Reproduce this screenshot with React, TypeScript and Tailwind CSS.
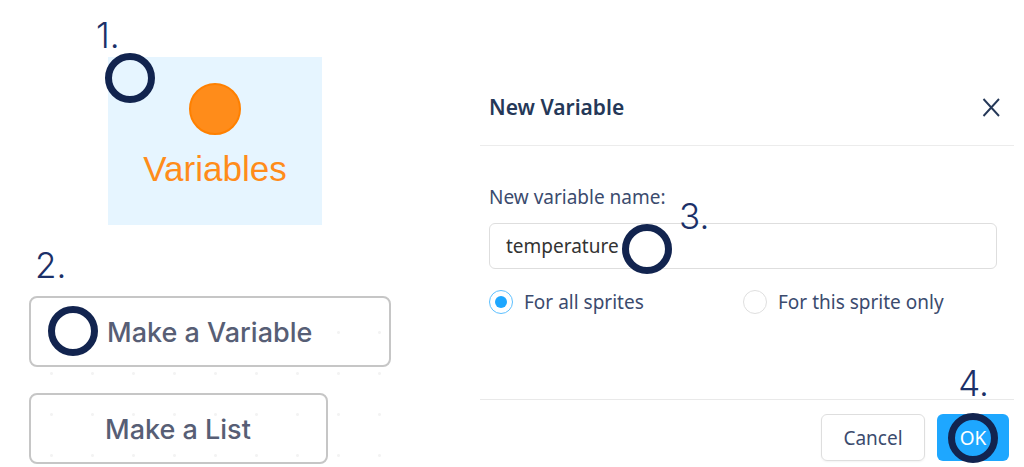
import type { ReactNode } from "react";

function Ring({ className }: { className: string }) {
  return (
    <span
      aria-hidden="true"
      className={`pointer-events-none absolute size-[50px] rounded-full border-[7px] border-[#12244f] ${className}`}
    />
  );
}

function Step({ children, className }: { children: ReactNode; className: string }) {
  return (
    <span className={`font-['Inter',sans-serif] text-[35px] leading-10 font-[350] text-[#1b3068] ${className}`}>
      {children}
    </span>
  );
}

function PaletteButton({ children, className }: { children: ReactNode; className: string }) {
  return (
    <button
      type="button"
      className={`h-[71px] rounded-lg border-2 border-[#c6c6c6] pt-0.5 font-['Inter',sans-serif] text-[27px] leading-9 font-medium whitespace-nowrap text-[#575e75] ${className}`}
    >
      {children}
    </button>
  );
}

function ScopeOption({ label, checked }: { label: string; checked?: boolean }) {
  return (
    <label className="flex items-center gap-[11px] whitespace-nowrap">
      <input
        type="radio"
        name="scope"
        defaultChecked={checked}
        className="grid size-6 shrink-0 appearance-none place-items-center rounded-full border border-[#dfdfdf] before:size-3 before:rounded-full checked:border-[#5dc0ff] checked:before:bg-[#1ea7ff]"
      />
      {label}
    </label>
  );
}

function Palette() {
  return (
    <section className="pt-[57px] pl-[29px]">
      <div className="relative ml-[79px] flex w-[214px] flex-col items-center gap-3 bg-[#e6f5ff] pt-[26px] pb-[34px]">
        <span className="size-[52px] rounded-full border-2 border-[#ff8000] bg-[#ff8c1a]" />
        <span className="font-['Liberation_Sans',sans-serif] text-[35px] leading-11 text-[#ff8c1a]">
          Variables
        </span>
        <Step className="absolute -top-[42px] -left-3">1.</Step>
        <Ring className="-top-1 -left-[3px]" />
      </div>
      <Step className="mt-5 ml-1.5 block">2.</Step>
      <div className="mt-[11px] flex w-[362px] flex-col items-start gap-[26px] bg-[radial-gradient(circle,#f3f3f3_1px,transparent_2px)] bg-size-[41px_41px] bg-position-[2px_16px]">
        <div className="relative">
          <PaletteButton className="pr-[77px] pl-[76px]">Make a Variable</PaletteButton>
          <Ring className="top-2.5 left-[19px]" />
        </div>
        <PaletteButton className="pr-[75px] pl-[74px]">Make a List</PaletteButton>
      </div>
    </section>
  );
}

function VariableDialog() {
  return (
    <section
      role="dialog"
      aria-labelledby="dialog-title"
      className="mt-[68px] mr-2.5 font-['Noto_Sans',sans-serif] text-[19px] leading-7 text-[#3b4b6e]"
    >
      <header className="flex h-[78px] items-center justify-between border-b border-[#ececec] pr-3.5 pl-[9px]">
        <h2 id="dialog-title" className="text-[21px] font-semibold text-[#253858]">
          New Variable
        </h2>
        <button type="button" aria-label="Close" className="text-[#253858]">
          <svg width="18" height="20" viewBox="0 0 18 20" fill="none" stroke="currentColor" strokeWidth="1.9">
            <path d="M1.5 2 17 19M17 2 1.5 19" />
          </svg>
        </button>
      </header>
      <div className="pt-[37px] pr-[17px] pb-[83px] pl-[9px]">
        <label htmlFor="variable-name" className="block">
          New variable name:
        </label>
        <div className="relative mt-3">
          <input
            id="variable-name"
            type="text"
            defaultValue="temperature"
            className="h-[46px] w-full rounded-md border border-[#dedede] px-4 text-[#333333]"
          />
          <Step className="absolute -top-[27px] left-[190px]">3.</Step>
          <Ring className="top-[1px] left-[133px]" />
        </div>
        <div className="mt-[19px] grid grid-cols-2">
          <ScopeOption label="For all sprites" checked />
          <ScopeOption label="For this sprite only" />
        </div>
      </div>
      <footer className="relative flex justify-end gap-3 border-t border-[#e9e9e9] pt-3.5 pr-[5px]">
        <button
          type="button"
          className="h-[47px] w-26 rounded-md border border-[#dedede] shadow-xs"
        >
          Cancel
        </button>
        <button type="button" className="relative h-[47px] w-18 rounded-md bg-[#1ea7ff] text-white">
          OK
          <Ring className="-top-[1px] left-[11px]" />
        </button>
        <Step className="absolute -top-[37px] right-[25px]">4.</Step>
      </footer>
    </section>
  );
}

export default function App() {
  return (
    <main className="grid grid-cols-[15fr_17fr] bg-white">
      <Palette />
      <VariableDialog />
    </main>
  );
}
